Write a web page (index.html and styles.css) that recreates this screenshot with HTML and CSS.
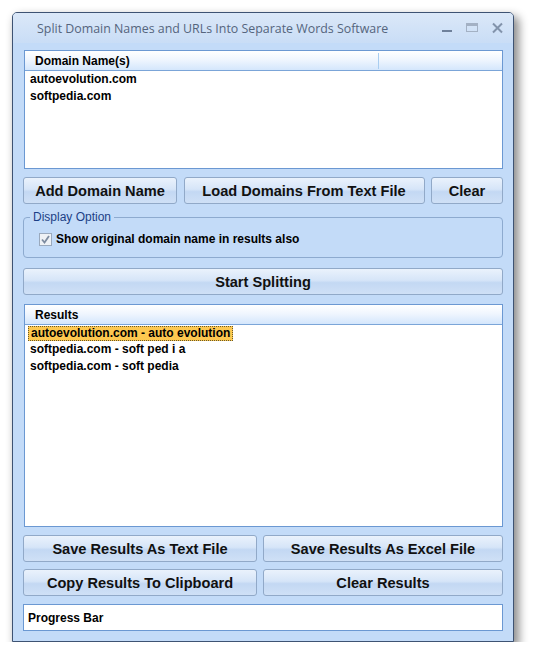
FILE: index.html
```html
<!DOCTYPE html>
<html lang="en">
<head>
    <meta charset="utf-8">
    <title>Split Domain Names and URLs Into Separate Words Software</title>
    <link rel="stylesheet" href="styles.css">
</head>
<body>
<div class="window">
    <div class="titlebar">
        <span class="titleText">Split Domain Names and URLs Into Separate Words Software</span>
        <div class="titleButtons">
            <svg class="tbMin" width="12" height="12" viewBox="0 0 12 12"><rect x="1" y="8" width="10" height="2" fill="#6f819b"/></svg>
            <svg class="tbMax" width="14" height="12" viewBox="0 0 14 12"><rect x="1.5" y="1.5" width="11" height="8" fill="none" stroke="#a3b1c4"/><rect x="2" y="2" width="10" height="2" fill="#a3b1c4"/></svg>
            <svg class="tbClose" width="13" height="12" viewBox="0 0 13 12"><path d="M2 1.5 L11 10.5 M11 1.5 L2 10.5" stroke="#8293ab" stroke-width="2"/></svg>
        </div>
    </div>
    <div class="client">
        <div class="listBox domainList">
            <div class="listHeader">
                <span class="colFirst">Domain Name(s)</span>
                <span class="colRest"></span>
            </div>
            <div class="listItem">autoevolution.com</div>
            <div class="listItem">softpedia.com</div>
        </div>

        <div class="buttonRow firstRow">
            <div class="btn btnAdd">Add Domain Name</div>
            <div class="btn btnLoad">Load Domains From Text File</div>
            <div class="btn btnClear">Clear</div>
        </div>

        <div class="groupBox">
            <span class="groupLabel">Display Option</span>
            <div class="checkLine">
                <svg class="checkBox" width="13" height="13" viewBox="0 0 13 13">
                    <rect x="0.5" y="0.5" width="12" height="12" fill="#eef1f5" stroke="#9aa9bd"/>
                    <path d="M3 6.5 L5.5 9.5 L10 3" fill="none" stroke="#7d8ba0" stroke-width="1.8"/>
                </svg>
                <span>Show original domain name in results also</span>
            </div>
        </div>

        <div class="btn btnStart">Start Splitting</div>

        <div class="listBox resultList">
            <div class="listHeader">
                <span class="colFirst">Results</span>
            </div>
            <div class="listItem selected">autoevolution.com - auto evolution</div>
            <div class="listItem">softpedia.com - soft ped i a</div>
            <div class="listItem">softpedia.com - soft pedia</div>
        </div>

        <div class="buttonRow saveRow">
            <div class="btn btnLeft">Save Results As Text File</div>
            <div class="btn btnRight">Save Results As Excel File</div>
        </div>
        <div class="buttonRow copyRow">
            <div class="btn btnLeft">Copy Results To Clipboard</div>
            <div class="btn btnRight">Clear Results</div>
        </div>

        <div class="progressBox">Progress Bar</div>
    </div>
</div>
</body>
</html>
```

FILE: styles.css
```css
body{
    margin: 0;
    background: #ffffff;
    font-family: "Liberation Sans", Arial, sans-serif;
    color: #000;
}
.window{
    margin: 12px 0 0 12px;
    width: 502px;
    height: 630px;
    box-sizing: border-box;
    border: 1px solid #3e5373;
    border-radius: 5px 5px 0 0;
    background: #c3dbf8;
    box-shadow: 4px 5px 10px 1px rgba(0,0,0,0.45);
}
.titlebar{
    height: 30px;
    display: flex;
    align-items: center;
    background: linear-gradient(#dbe8f8, #c9ddf6);
    border-radius: 4px 4px 0 0;
}
.titleText{
    margin-left: 24px;
    margin-top: 1px;
    font-family: "Open Sans", "Noto Sans", sans-serif;
    font-size: 12.4px;
    color: #55657d;
}
.titleButtons{
    margin-left: auto;
    margin-right: 9px;
    display: flex;
    align-items: center;
    gap: 12px;
}
.client{
    padding: 7px 10px 0 10px;
    display: flex;
    flex-direction: column;
}
.listBox{
    margin-left: 1px;
    background: #fff;
    border: 1px solid #6b98d2;
    box-sizing: border-box;
}
.domainList{
    height: 119px;
}
.resultList{
    height: 223px;
    margin-top: 9px;
}
.listHeader{
    height: 19px;
    display: flex;
    background: linear-gradient(#ffffff, #f0f6fe 45%, #d4e6fc);
    border-bottom: 1px solid #7ba5d8;
    font-size: 12px;
    font-weight: bold;
    line-height: 19px;
}
.colFirst{
    width: 354px;
    padding-left: 10px;
    border-right: 1px solid #a9cdf0;
    box-sizing: border-box;
    height: 16px;
    margin-top: 2px;
    line-height: 16px;
}
.resultList .colFirst{
    border-right: none;
}
.listItem{
    font-size: 12px;
    font-weight: bold;
    line-height: 17px;
    padding-left: 5px;
}
.resultList .listItem{
    line-height: 16.5px;
}
.resultList .listItem.selected{
    display: table;
    margin: 1px 0 0 3px;
    padding: 0 2px;
    line-height: 13px;
    background: #fdc850;
    border: 1px dotted #6a5a2a;
}
.buttonRow{
    display: flex;
    justify-content: space-between;
}
.firstRow{
    margin-top: 8px;
}
.saveRow{
    margin-top: 8px;
}
.copyRow{
    margin-top: 7px;
}
.btn{
    height: 27px;
    box-sizing: border-box;
    border: 1px solid #91a9c8;
    border-radius: 3px;
    background: linear-gradient(#eaf2fc, #d6e5f8 45%, #c3d8f3 55%, #cfe0f6);
    display: flex;
    align-items: center;
    justify-content: center;
    font-size: 14.6px;
    font-weight: bold;
    color: #111;
}
.btnAdd{ width: 154px; }
.btnLoad{ width: 241px; }
.btnClear{ width: 72px; }
.btnLeft{ width: 234px; }
.btnRight{ width: 240px; }
.btnStart{
    margin-top: 10px;
}
.groupBox{
    margin-top: 13px;
    height: 41px;
    border: 1px solid #8daacf;
    border-radius: 4px;
    position: relative;
    box-sizing: border-box;
}
.groupLabel{
    position: absolute;
    left: 6px;
    top: -8px;
    padding: 0 3px;
    background: #c3dbf8;
    font-size: 12px;
    color: #1c3f86;
    line-height: 14px;
}
.checkLine{
    display: flex;
    align-items: center;
    margin: 14px 0 0 15px;
    font-size: 12px;
    font-weight: bold;
}
.checkBox{
    margin-right: 4px;
}
.progressBox{
    margin-top: 8px;
    height: 27px;
    box-sizing: border-box;
    background: #fff;
    border: 1px solid #6b98d2;
    padding-left: 4px;
    display: flex;
    align-items: center;
    font-size: 12px;
    font-weight: bold;
}
```
